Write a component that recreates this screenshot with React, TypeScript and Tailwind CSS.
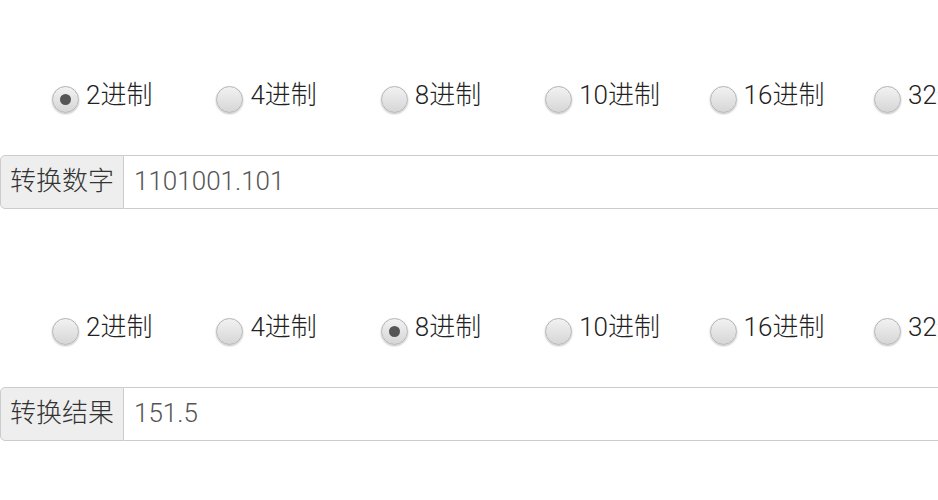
import React from "react";

const bases = ["2进制", "4进制", "8进制", "10进制", "16进制", "32进制", "64进制"];

function Radio({ checked }: { checked: boolean }) {
  return (
    <span className="mt-[4px] flex h-[27px] w-[27px] shrink-0 items-center justify-center rounded-full border border-[#b4b4b4] bg-gradient-to-b from-[#f2f2f2] to-[#d6d6d6] shadow-[0_1px_2px_rgba(0,0,0,0.25)]">
      {checked && <span className="h-[11px] w-[11px] rounded-full bg-[#555555]" />}
    </span>
  );
}

function RadioRow({ selected }: { selected: number }) {
  return (
    <div className="flex h-[54px] items-center whitespace-nowrap pl-[52px]">
      {bases.map((b, i) => (
        <div key={b} className="flex w-[164.4px] shrink-0 items-center gap-[7px]">
          <Radio checked={i === selected} />
          <span className="mb-[5px] text-[26px] font-light leading-none text-[#222222]">{b}</span>
        </div>
      ))}
    </div>
  );
}

function InputGroup({ label, value }: { label: string; value: string }) {
  return (
    <div className="flex h-[54px] w-[1000px]">
      <div className="flex items-center rounded-l-[5px] border border-[#cccccc] bg-[#eeeeee] px-[9px] pb-[3px] text-[26px] font-light leading-none text-[#333333]">
        {label}
      </div>
      <div className="flex flex-1 items-center border-y border-[#cccccc] bg-white pb-[3px] pl-[10px] text-[26px] font-light leading-none text-[#555555]">
        {value}
      </div>
    </div>
  );
}

export default function App() {
  return (
    <div
      className="h-[500px] w-[938px] overflow-hidden bg-white"
      style={{ fontFamily: 'Roboto, "Noto Sans CJK SC", sans-serif' }}
    >
      <div className="pt-[70px]">
        <RadioRow selected={0} />
        <div className="mt-[31px]">
          <InputGroup label="转换数字" value="1101001.101" />
        </div>
        <div className="mt-[93px]">
          <RadioRow selected={2} />
        </div>
        <div className="mt-[31px]">
          <InputGroup label="转换结果" value="151.5" />
        </div>
      </div>
    </div>
  );
}
